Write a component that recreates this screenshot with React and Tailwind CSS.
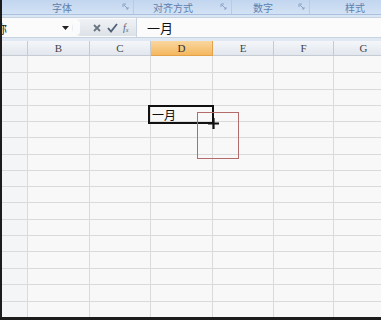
import React from 'react'

const cols = [
  { label: '', w: 26 },
  { label: 'B', w: 62 },
  { label: 'C', w: 61 },
  { label: 'D', w: 62, active: true },
  { label: 'E', w: 61 },
  { label: 'F', w: 60 },
  { label: 'G', w: 60 },
]

const rowHeights = [17, 17, 16, 16, 16, 17, 16, 16, 16, 17, 16, 16, 17, 16, 17, 16]

const groups = [
  { label: '字体', w: 132, pl: 50 },
  { label: '对齐方式', w: 98, pl: 19 },
  { label: '数字', w: 78, pl: 21 },
  { label: '样式', w: 80, pl: 35, noLauncher: true },
]

const cjk = { fontFamily: '"Noto Sans CJK SC", "Noto Sans", sans-serif' }

function Launcher() {
  return (
    <svg width="7" height="7" viewBox="0 0 7 7" className="absolute right-[4px] top-[3px]">
      <path d="M1 1h3M1 1v3M2 2l4 4M6 4v2H4" stroke="#8aa3c6" strokeWidth="1" fill="none" />
    </svg>
  )
}

export default function App() {
  return (
    <div className="relative w-[381px] h-[320px] overflow-hidden bg-[#f7f7f7] border-l-2 border-b-[3px] border-[#1c1c1c]">
      {/* ribbon group labels */}
      <div className="flex h-[15px] bg-gradient-to-b from-[#c2d6ef] to-[#d3e2f5] border-b border-[#a9c0de]">
        {groups.map((g) => (
          <div
            key={g.label}
            className="relative flex items-center border-r border-[#b6cbe6] shrink-0"
            style={{ width: g.w, paddingLeft: g.pl }}
          >
            <span className="text-[10px] leading-[13px] text-[#5f80ad]" style={cjk}>
              {g.label}
            </span>
            {!g.noLauncher && <Launcher />}
          </div>
        ))}
      </div>

      {/* formula bar */}
      <div className="h-[2px] bg-[#dbe6f4]" />
      <div className="flex items-center h-[21px] bg-[#fbfbfb] border-y border-[#c8d3e2]">
        <div className="relative w-[70px] h-full overflow-hidden shrink-0">
          <span className="absolute -left-[7px] top-[2px] text-[12px] text-[#222]" style={cjk}>称</span>
          <svg width="7" height="4" viewBox="0 0 7 4" className="absolute left-[60px] top-[8px]">
            <path d="M0 0h7L3.5 4z" fill="#222" />
          </svg>
        </div>
        <div className="flex items-center w-[64px] h-[17px] rounded-l-full bg-gradient-to-b from-[#f0f2f5] to-[#dde2e8] shrink-0">
          <div className="w-[7px] h-[15px] ml-[1px] rounded-full bg-white/80" />
          <svg width="10" height="10" viewBox="0 0 10 10" className="ml-[12px]">
            <path d="M2 2l6 6M8 2l-6 6" stroke="#6b7480" strokeWidth="1.8" />
          </svg>
          <svg width="11" height="10" viewBox="0 0 11 10" className="ml-[5px]">
            <path d="M1 5l3 3.5L10 1" stroke="#4d6075" strokeWidth="1.8" fill="none" />
          </svg>
          <span className="ml-[5px] text-[10px] italic leading-none text-[#56606b]" style={{ fontFamily: '"Liberation Serif", serif' }}>
            f<sub className="text-[6px]">x</sub>
          </span>
        </div>
        <div className="w-px h-full bg-[#c8d3e2] shrink-0" />
        <span className="ml-[10px] text-[13px] leading-none text-[#111]" style={cjk}>一月</span>
      </div>
      <div className="h-[3px] bg-[#dfe8f3]" />

      {/* column headers */}
      <div className="flex h-[15px]">
        {cols.map((c, i) => (
          <div
            key={i}
            className={
              'flex items-center justify-center shrink-0 border-r border-b text-[11px] ' +
              (c.active
                ? 'bg-gradient-to-b from-[#f9d79f] to-[#f4b75e] border-[#e3a24a] text-[#333]'
                : 'bg-gradient-to-b from-[#f4f6f9] to-[#e2e7ee] border-[#c5cbd3] text-[#444]')
            }
            style={{ width: c.w, fontFamily: '"Liberation Serif", serif' }}
          >
            {c.label}
          </div>
        ))}
      </div>

      {/* grid */}
      {rowHeights.map((h, r) => (
        <div key={r} className="flex" style={{ height: h }}>
          {cols.map((c, i) => (
            <div
              key={i}
              className={
                'shrink-0 border-r border-b border-[#dadada] ' + (i === 0 ? 'bg-[#f3f5f7]' : 'bg-[#f8f8f8]')
              }
              style={{ width: c.w }}
            />
          ))}
        </div>
      ))}

      {/* selected cell */}
      <div className="absolute left-[146px] top-[105px] w-[66px] h-[19px] border-2 border-[#111] flex items-center pl-[2px]">
        <span className="text-[12px] leading-none text-[#111]" style={cjk}>一月</span>
      </div>

      {/* drag outline */}
      <div className="absolute left-[195px] top-[112px] w-[42px] h-[47px] border border-[#b36b6b]" />

      {/* fill cursor */}
      <svg width="11" height="11" viewBox="0 0 11 11" className="absolute left-[206px] top-[118px]">
        <path d="M5.5 0v11M0 5.5h11" stroke="#111" strokeWidth="2.2" />
      </svg>
    </div>
  )
}
